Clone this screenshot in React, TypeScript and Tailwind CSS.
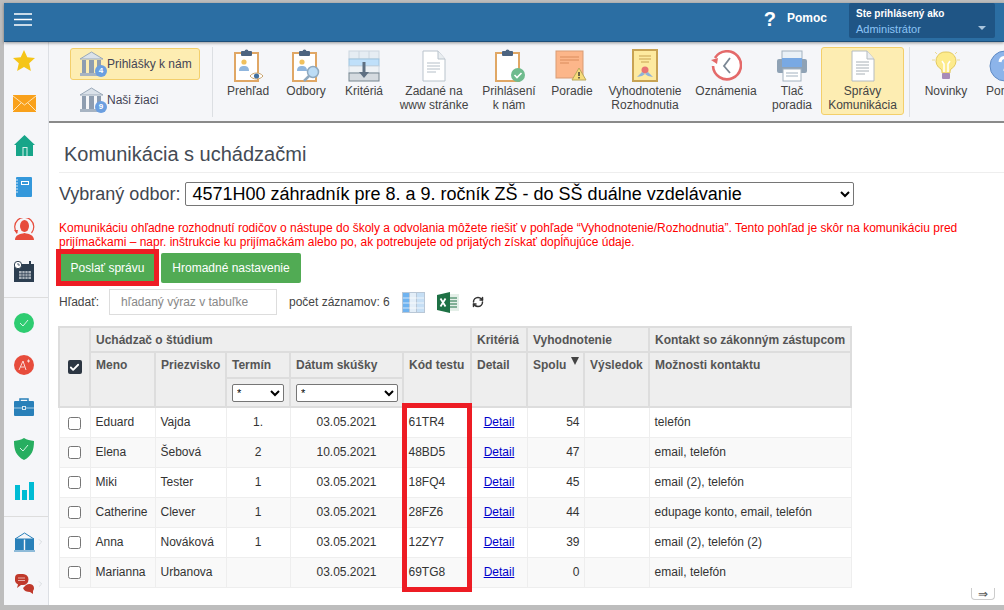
import { Check, ChevronRight, RefreshCw } from "lucide-react";
import type { ReactNode } from "react";

const Clipboard = ({ children }: { children?: ReactNode }) => (
  <svg width="34" height="34" viewBox="0 0 34 34" className="block">
    <rect x="4" y="4" width="23" height="28" fill="#fff" stroke="#e0a765" strokeWidth="2" />
    <rect x="10" y="2" width="11" height="5" rx="1" fill="#4d6480" />
    <circle cx="15.5" cy="2.5" r="2" fill="#4d6480" />
    {children}
  </svg>
);

const Person = () => (
  <g>
    <circle cx="13" cy="13" r="2.6" fill="#f1c15d" />
    <path d="M8 22c0-4 2-5 5-5s5 1 5 5z" fill="#90b6de" />
  </g>
);

const Bank = ({ n }: { n: number }) => (
  <div className="relative h-[26px] w-[26px] shrink-0">
    <svg width="25" height="26" viewBox="0 0 25 26" className="block">
      <path d="M1 8 12.5 1 24 8z" fill="#dbe2ea" stroke="#9aa9b9" />
      <rect x="3" y="9" width="4" height="13" fill="#8e9db0" />
      <rect x="10" y="9" width="5" height="13" fill="#8e9db0" />
      <rect x="18" y="9" width="4" height="13" fill="#8e9db0" />
      <rect x="1" y="22" width="23" height="3" fill="#a7b4c3" />
    </svg>
    <span className="absolute bottom-0 right-[-2px] flex h-[12px] w-[12px] items-center justify-center rounded-full bg-[#6b9fe0] text-[8px] font-bold text-white">{n}</span>
  </div>
);

const toolbarIcons: Record<string, ReactNode> = {
  prehlad: (
    <Clipboard>
      <Person />
      <path d="M19 27c3-4 10-4 13 0-3 4-10 4-13 0z" fill="#fff" stroke="#c9a36d" />
      <circle cx="25.5" cy="27" r="2.6" fill="#41709f" />
    </Clipboard>
  ),
  odbory: (
    <Clipboard>
      <Person />
      <circle cx="24" cy="23" r="5.5" fill="#bcdcf5" stroke="#8fa9bf" strokeWidth="1.5" />
      <path d="m20 27-5 5" stroke="#8fa9bf" strokeWidth="2.5" />
    </Clipboard>
  ),
  kriteria: (
    <svg width="32" height="32" viewBox="0 0 32 32" className="block">
      <rect x="1" y="1" width="30" height="8" fill="#e6edf3" stroke="#ccd6df" />
      <path d="M11 1v8M21 1v8" stroke="#ccd6df" />
      <rect x="1" y="9" width="30" height="7" fill="#bfe0fa" stroke="#9fc3dd" />
      <rect x="1" y="16" width="30" height="7" fill="#eef2f5" stroke="#ccd6df" />
      <rect x="1" y="23" width="30" height="8" fill="#d5dbe0" stroke="#76858f" />
      <path d="M16 12v13" stroke="#5f7082" strokeWidth="3" />
      <path d="m11 22 5 6 5-6z" fill="#5f7082" />
    </svg>
  ),
  zadane: (
    <svg width="24" height="32" viewBox="0 0 24 32" className="block">
      <path d="M1 1h15l7 8v22H1z" fill="#fff" stroke="#b9c3cc" />
      <path d="M16 1v8h7" fill="#e9edf0" stroke="#b9c3cc" />
      <path d="M5 13h13M5 16h13M5 19h13M5 22h9" stroke="#b5bfc8" />
    </svg>
  ),
  prihlaseni: (
    <Clipboard>
      <circle cx="26" cy="26" r="7" fill="#6fbb8e" />
      <path d="m22.5 26 2.500 2.500 4.500-4.500" stroke="#fff" strokeWidth="1.6" fill="none" />
    </Clipboard>
  ),
  poradie: (
    <svg width="34" height="34" viewBox="0 0 34 34" className="block">
      <rect x="1" y="2" width="27" height="27" fill="#fcb68a" stroke="#d99b74" />
      <path d="M5 8h19M5 11h19M5 14h9" stroke="#d98b5d" strokeWidth="1.2" />
      <path d="M17 31 24 19l7 12z" fill="#f7dc7a" stroke="#b9a75c" />
      <path d="M24 23v4M24 28v1.500" stroke="#333" strokeWidth="1.4" />
    </svg>
  ),
  vyhodnotenie: (
    <svg width="26" height="33" viewBox="0 0 26 33" className="block">
      <rect x="1" y="1" width="24" height="31" fill="#fdeaa0" stroke="#c8a353" strokeWidth="2" />
      <path d="M7 7h12M7 10h12M9 13h8" stroke="#c8a353" />
      <circle cx="13" cy="21" r="3.500" fill="#e87474" />
      <path d="m5 28 5-5 3 2 3-2 5 5-5-1-3-2-3 2z" fill="#8fb1da" />
    </svg>
  ),
  oznamenia: (
    <svg width="32" height="32" viewBox="0 0 32 32" className="block">
      <path d="M5 8a14 14 0 1 1-2 8" fill="#fff" stroke="#e46a6a" strokeWidth="2.6" />
      <path d="m1 10 7-2-1 6z" fill="#e46a6a" />
      <path d="m20 8-6 8 6 7" fill="none" stroke="#7a8794" strokeWidth="1.8" />
    </svg>
  ),
  tlac: (
    <svg width="32" height="32" viewBox="0 0 32 32" className="block">
      <rect x="6" y="1" width="20" height="12" fill="#eaf1f7" stroke="#a3b2c0" />
      <rect x="1" y="9" width="30" height="14" rx="2" fill="#8fa2b5" />
      <rect x="6" y="8" width="20" height="9" fill="#79a9e3" />
      <rect x="7" y="19" width="18" height="12" fill="#fff" stroke="#a3b2c0" />
      <path d="M10 23h12M10 26h12" stroke="#a3b2c0" />
    </svg>
  ),
  spravy: (
    <svg width="24" height="32" viewBox="0 0 24 32" className="block">
      <path d="M1 1h15l7 8v22H1z" fill="#fff" stroke="#b5bcc0" />
      <path d="M16 1v8h7" fill="#eceef0" stroke="#b5bcc0" />
      <path d="M5 12h13M5 15h13M5 18h13M5 21h13M5 24h9" stroke="#a8b0b6" />
    </svg>
  ),
  novinky: (
    <svg width="30" height="32" viewBox="0 0 30 32" className="block">
      <path d="M15 2a9 9 0 0 0-5 17c1 1 1 3 1 4h8c0-1 0-3 1-4a9 9 0 0 0-5-17z" fill="#fdeb8c" stroke="#e3c95f" />
      <path d="M13 22v-8l-2-3M17 22v-8l2-3" stroke="#fff" strokeWidth="1.500" fill="none" />
      <rect x="11" y="23" width="8" height="6" rx="1" fill="#a78bb8" />
      <path d="M1 10h3M26 10h3M4 2l2 2M26 2l-2 2" stroke="#e9d994" />
    </svg>
  ),
  pomoc: (
    <svg width="32" height="32" viewBox="0 0 32 32" className="block">
      <circle cx="16" cy="16" r="15" fill="#8cb4ea" stroke="#5f8ac4" />
      <path d="M11 12a5 5 0 1 1 7 5c-2 1-2 2-2 4" fill="none" stroke="#fff" strokeWidth="3" />
    </svg>
  ),
};

const tools = [
  { id: "prehlad", w: "w-[58px]", label: ["Prehľad"] },
  { id: "odbory", w: "w-[58px]", label: ["Odbory"] },
  { id: "kriteria", w: "w-[58px]", label: ["Kritériá"] },
  { id: "zadane", w: "w-[82px]", label: ["Zadané na", "www stránke"] },
  { id: "prihlaseni", w: "w-[68px]", label: ["Prihlásení", "k nám"] },
  { id: "poradie", w: "w-[58px]", label: ["Poradie"] },
  { id: "vyhodnotenie", w: "w-[88px]", label: ["Vyhodnotenie", "Rozhodnutia"] },
  { id: "oznamenia", w: "w-[74px]", label: ["Oznámenia"] },
  { id: "tlac", w: "w-[58px]", label: ["Tlač", "poradia"] },
];

const sideTop: ReactNode[] = [
  <svg key="star" width="24" height="24" viewBox="0 0 24 24"><path d="m12 1 3.300 7.300 7.700.8-5.800 5.200 1.700 7.700L12 18l-6.900 4 1.700-7.700L1 9.100l7.700-.8z" fill="#f5c518" /></svg>,
  <svg key="mail" width="23" height="17" viewBox="0 0 23 17"><rect width="23" height="17" fill="#f9a11b" /><path d="m0 1 11.500 9L23 1M0 16l8-8M23 16l-8-8" stroke="#fde3b4" fill="none" /></svg>,
  <svg key="home" width="21" height="21" viewBox="0 0 21 21"><path d="M10.500 0 21 10h-2v11H2V10H0z" fill="#17a589" /><rect x="8.500" y="12" width="5" height="9" fill="#d9f1ec" /><rect x="9.500" y="13" width="3" height="8" fill="#17a589" /></svg>,
  <svg key="book" width="16" height="20" viewBox="0 0 16 20"><rect width="16" height="20" rx="1" fill="#3498db" /><rect x="5" y="4" width="8" height="4" fill="#fff" /><rect x="6" y="5" width="6" height="2" fill="#3498db" /><path d="M0 3h2M0 6h2M0 9h2M0 12h2M0 15h2" stroke="#d7e9f6" /></svg>,
  <svg key="user" width="21" height="22" viewBox="0 0 21 22"><path d="M3 15a9.500 9.500 0 1 1 14.500 0" fill="none" stroke="#e74c3c" strokeWidth="1.200" /><path d="m0 12 4 0-1 4z" fill="#e74c3c" /><ellipse cx="10.500" cy="8" rx="4.500" ry="6" fill="#e74c3c" /><path d="M1 22c0-5 5-6 9.500-7 4.500 1 9.500 2 9.500 7z" fill="#e74c3c" /></svg>,
  <svg key="cal" width="21" height="21" viewBox="0 0 21 21"><rect y="3" width="20" height="18" fill="#2c3e50" /><rect x="15" width="2" height="5" fill="#2c3e50" /><path d="M5 10h12v8H5z" fill="#aab2ba" /><path d="M5 12.700h12M5 15.300h12M8 10v8M11 10v8M14 10v8" stroke="#2c3e50" strokeWidth="0.7" /><circle cx="4" cy="4" r="3.700" fill="#fff" stroke="#2c3e50" /><path d="M4 2v2h2" stroke="#2c3e50" strokeWidth="0.8" fill="none" /></svg>,
];

const sideMid: ReactNode[] = [
  <svg key="ok" width="20" height="20" viewBox="0 0 20 20"><circle cx="10" cy="10" r="10" fill="#2ecc71" /><path d="m6 10 3 3 5-6" stroke="#d5f5e3" fill="none" /></svg>,
  <svg key="a" width="20" height="20" viewBox="0 0 20 20"><circle cx="10" cy="10" r="10" fill="#e74c3c" /><path d="m5 15 4-9 3 9M6.500 12h4M13 6h3M14.500 4.500v3" stroke="#fadbd8" fill="none" /></svg>,
  <svg key="case" width="20" height="18" viewBox="0 0 20 18"><path d="M6 3V1h8v2" fill="none" stroke="#2980b9" strokeWidth="1.500" /><rect y="3" width="20" height="15" rx="1" fill="#2980b9" /><path d="M0 10h20" stroke="#a9cce3" /><rect x="8.500" y="8.500" width="3" height="3" fill="#2980b9" stroke="#d4e6f1" /></svg>,
  <svg key="shield" width="20" height="22" viewBox="0 0 20 22"><path d="M10 0c3 2 6 2.500 10 3 0 9-2 15-10 19C2 18 0 12 0 3c4-.5 7-1 10-3z" fill="#27ae60" /><path d="m6 10 3 3 5-6" stroke="#d5f5e3" fill="none" /></svg>,
  <svg key="chart" width="19" height="18" viewBox="0 0 19 18"><rect y="3" width="5" height="15" fill="#00bcd4" /><rect x="7" y="8" width="5" height="10" fill="#00bcd4" /><rect x="14" width="5" height="18" fill="#00bcd4" /></svg>,
];

const Side = ({ children }: { children: ReactNode }) => (
  <div className="flex h-[42px] items-center justify-center pr-[4px]">{children}</div>
);

const SideArrow = ({ children }: { children: ReactNode }) => (
  <div className="flex h-[42px] items-center pl-[10px]">
    {children}
    <ChevronRight className="ml-[1px] h-[14px] w-[9px] shrink-0 text-[#cfd3d7]" />
  </div>
);

const rows = [
  ["Eduard", "Vajda", "1.", "03.05.2021", "61TR4", "54", "telefón"],
  ["Elena", "Šebová", "2", "10.05.2021", "48BD5", "47", "email, telefón"],
  ["Miki", "Tester", "1", "03.05.2021", "18FQ4", "45", "email (2), telefón"],
  ["Catherine", "Clever", "1", "03.05.2021", "28FZ6", "44", "edupage konto, email, telefón"],
  ["Anna", "Nováková", "1", "03.05.2021", "12ZY7", "39", "email (2), telefón (2)"],
  ["Marianna", "Urbanova", "", "03.05.2021", "69TG8", "0", "email, telefón"],
];

const th = "border-2 border-[#dddddd] bg-[#eeeeee] px-[5px] text-left align-top font-bold text-[#555]";
const td = "border border-[#eeeeee] px-[5px] align-middle";

export default function App() {
  return (
    <div className="flex h-[610px] w-[1004px] flex-col overflow-hidden bg-[#bdbdbd] pb-[5px] pl-[4px] pt-[3px] font-['Liberation_Sans',Arial,sans-serif] text-[12px] text-[#333]">
      <header className="z-10 flex h-[39px] shrink-0 items-start border-b border-[#1d4f7a] bg-[#2b6ea3] shadow-[0_1px_3px_rgba(0,0,0,0.4)]">
        <svg width="18" height="13" viewBox="0 0 18 13" className="ml-[10px] mt-[10px]">
          <path d="M0 1h18M0 6.500h18M0 12h18" stroke="#fff" strokeWidth="1.500" />
        </svg>
        <div className="ml-auto flex items-start">
          <span className="mt-[4px] text-[20px] font-bold leading-[24px] text-white">?</span>
          <span className="ml-[11px] mt-[8px] text-[12px] font-bold leading-[14px] text-white">Pomoc</span>
          <div className="relative ml-[22px] mr-[9px] h-[35px] w-[146px] rounded-[2px] bg-[#1f5585] px-[7px] pt-[4px] text-[11px]">
            <div className="text-[10px] font-bold leading-[14px] text-white">Ste prihlásený ako</div>
            <div className="mt-[1px] leading-[15px] text-[#8cc4f5]">Administrátor</div>
            <span className="absolute bottom-[8px] right-[9px] h-0 w-0 border-x-[4px] border-t-[4px] border-x-transparent border-t-[#a9c4dc]" />
          </div>
        </div>
      </header>

      <div className="flex min-h-0 flex-1">
        <aside className="w-[45px] shrink-0 overflow-hidden border-r border-[#dcdfe4] bg-[#f5f6f9]">
          <div className="-mt-[2px]">
            {sideTop.map((icon, i) => <Side key={i}>{icon}</Side>)}
          </div>
          <div className="mb-[4px] mt-[5px] border-t border-[#dddddd]" />
          {sideMid.map((icon, i) => <Side key={i}>{icon}</Side>)}
          <div className="mb-[4px] mt-[4px] border-t border-[#dddddd]" />
          <SideArrow>
            <svg width="21" height="20" viewBox="0 0 21 20" className="shrink-0">
              <path d="M10.500 1 20 7H1z" fill="none" stroke="#2980b9" />
              <path d="M1 7h8.800v11H1zM11.200 7H20v11h-8.800z" fill="#2980b9" />
              <path d="M0 19h21" stroke="#2980b9" />
            </svg>
          </SideArrow>
          <SideArrow>
            <svg width="21" height="20" viewBox="0 0 21 20" className="shrink-0"><path d="M1 4a4 4 0 0 1 4-4h4a5 5 0 0 1 0 11H7l-4 3 1-3.500A5 5 0 0 1 1 7z" fill="#c0392b" /><path d="M4 4h7M4 6.500h7" stroke="#e6b0aa" /><path d="M12 11c3-2 8-1 8 3 0 1.500-.5 2-1 3v3l-3-2c-3 0-6-1-7-4z" fill="#c0392b" /></svg>
          </SideArrow>
        </aside>

        <div className="flex min-w-0 flex-1 flex-col bg-white">
          <div className="flex h-[81px] shrink-0 items-start overflow-hidden border-b-2 border-[#8a8a8a] bg-[#f5f6f9] pt-[5px]">
            <div className="ml-[21px] mt-[1px] flex w-[130px] shrink-0 flex-col">
              <div className="flex h-[32px] items-center gap-[2px] whitespace-nowrap rounded-[3px] border border-[#f3cf6b] bg-[#fdedb2] pl-[8px] text-[#445]">
                <Bank n={4} />
                Prihlášky k nám
              </div>
              <div className="mt-[4px] flex h-[32px] items-center gap-[2px] whitespace-nowrap pl-[9px] text-[#445]">
                <Bank n={9} />
                Naši žiaci
              </div>
            </div>
            <div className="ml-[12px] mr-[6px] h-[70px] w-px shrink-0 bg-[#dcdfe3]" />
            {tools.map((t) => (
              <div key={t.id} className={`flex ${t.w} shrink-0 flex-col items-center whitespace-nowrap text-center leading-[14px] text-[#444]`}>
                <div className="flex h-[37px] items-center justify-center">{toolbarIcons[t.id]}</div>
                {t.label.map((l) => <div key={l}>{l}</div>)}
              </div>
            ))}
            <div className="flex h-[68px] w-[83px] shrink-0 flex-col items-center rounded-[3px] border border-[#f3cf6b] bg-[#fdedb2] text-center leading-[14px] text-[#444]">
              <div className="flex h-[36px] items-center justify-center">{toolbarIcons.spravy}</div>
              <div>Správy</div>
              <div>Komunikácia</div>
            </div>
            <div className="ml-[5px] mr-[9px] h-[70px] w-px shrink-0 bg-[#dcdfe3]" />
            <div className="flex w-[54px] shrink-0 flex-col items-center leading-[14px] text-[#444]">
              <div className="flex h-[37px] items-center justify-center">{toolbarIcons.novinky}</div>
              Novinky
            </div>
            <div className="ml-[13px] flex w-[40px] shrink-0 flex-col items-start leading-[14px] text-[#444]">
              <div className="flex h-[37px] items-center justify-center pl-[3px]">{toolbarIcons.pomoc}</div>
              Pomoc
            </div>
          </div>

          <div className="relative flex-1 pl-[10px]">
            <h1 className="ml-[5px] pt-[19px] text-[20px] font-normal leading-[24px] text-[#444b55]">Komunikácia s uchádzačmi</h1>
            <div className="mt-[6px] border-t border-[#eeeeee]" />
            <div className="mt-[9px] flex h-[24px] items-center">
              <span className="text-[18px] text-[#3f4650]">Vybraný odbor:</span>
              <select className="ml-[5px] h-[24px] w-[669px] rounded-[2px] border border-[#767676] bg-white pl-[2px] text-[18px] text-black">
                <option>4571H00 záhradník pre 8. a 9. ročník ZŠ - do SŠ duálne vzdelávanie</option>
              </select>
            </div>
            <p className="mt-[13px] w-[920px] pt-[2px] leading-[14px] text-[#ff0000]">
              Komunikáciu ohľadne rozhodnutí rodičov o nástupe do školy a odvolania môžete riešiť v pohľade “Vyhodnotenie/Rozhodnutia”. Tento pohľad je skôr na komunikáciu pred prijímačkami – napr. inštrukcie ku prijímačkám alebo po, ak potrebujete od prijatých získať dopĺňujúce údaje.
            </p>
            <div className="mt-[4px] flex gap-[5px]">
              <div className="relative">
                <button className="h-[30px] w-[97px] rounded-[2px] bg-[#51ab54] text-[12px] text-white">Poslať správu</button>
                <span className="absolute bottom-[-3px] left-[-3px] right-[-3px] top-[-4px] border-[5px] border-[#ed1c24]" />
              </div>
              <button className="h-[30px] w-[140px] rounded-[2px] bg-[#51ab54] text-[12px] text-white">Hromadné nastavenie</button>
            </div>
            <div className="mt-[6px] flex h-[26px] items-center">
              <span className="w-[50px] text-[#444]">Hľadať:</span>
              <input readOnly placeholder="hľadaný výraz v tabuľke" className="h-[26px] w-[168px] border border-[#dddddd] bg-white pl-[11px] text-[12px] placeholder:text-[#888]" />
              <span className="ml-[12px] text-[#444]">počet záznamov: 6</span>
              <svg width="23" height="21" viewBox="0 0 23 21" className="ml-[12px]">
                <rect width="23" height="21" fill="#b9c7d6" />
                <rect x="1" y="1" width="6" height="19" fill="#6fb3f0" />
                <rect x="8" y="1" width="6" height="19" fill="#e3eef8" />
                <rect x="15" y="1" width="7" height="19" fill="#c6dff5" />
                <path d="M1 6h21M1 11h21M1 16h21" stroke="#fff" strokeWidth="0.7" />
              </svg>
              <svg width="22" height="21" viewBox="0 0 22 21" className="ml-[12px]">
                <rect x="9" y="2" width="13" height="17" fill="#e4efe8" />
                <path d="M13 6h7M13 9h7M13 12h7M13 15h7" stroke="#1e7145" />
                <path d="M0 3 13 0v21L0 18z" fill="#1e7145" />
                <path d="m3.500 6.500 5 8M8.500 6.500l-5 8" stroke="#fff" strokeWidth="1.800" />
              </svg>
              <RefreshCw className="ml-[13px] h-[12px] w-[12px] text-[#333]" strokeWidth={3} />
            </div>

            <div className="relative -ml-[1px] mt-[11px] w-[794px]">
              <table className="w-[794px] table-fixed border-collapse text-[12px]">
                <colgroup>
                  <col className="w-[31px]" />
                  <col className="w-[65px]" />
                  <col className="w-[71px]" />
                  <col className="w-[64px]" />
                  <col className="w-[113px]" />
                  <col className="w-[68px]" />
                  <col className="w-[56px]" />
                  <col className="w-[57px]" />
                  <col className="w-[65px]" />
                  <col />
                </colgroup>
                <thead>
                  <tr className="h-[25px]">
                    <th rowSpan={3} className={`${th} !align-middle !px-0`}>
                      <span className="mx-auto flex h-[14px] w-[14px] items-center justify-center rounded-[2px] bg-[#2c3642] text-white">
                        <Check className="h-[11px] w-[11px]" strokeWidth={4} />
                      </span>
                    </th>
                    <th colSpan={5} className={`${th} !align-middle`}>Uchádzač o štúdium</th>
                    <th className={`${th} !align-middle`}>Kritériá</th>
                    <th colSpan={2} className={`${th} !align-middle`}>Vyhodnotenie</th>
                    <th className={`${th} !align-middle whitespace-nowrap`}>Kontakt so zákonným zástupcom</th>
                  </tr>
                  <tr className="h-[26px]">
                    <th rowSpan={2} className={`${th} pt-[3px]`}>Meno</th>
                    <th rowSpan={2} className={`${th} pt-[3px]`}>Priezvisko</th>
                    <th className={`${th} pt-[3px]`}>Termín</th>
                    <th className={`${th} pt-[3px]`}>Dátum skúšky</th>
                    <th rowSpan={2} className={`${th} pt-[3px] whitespace-nowrap`}>Kód testu</th>
                    <th rowSpan={2} className={`${th} pt-[3px]`}>Detail</th>
                    <th rowSpan={2} className={`${th} pt-[3px]`}>
                      <span className="flex justify-between">
                        Spolu
                        <span className="mr-[-1px] mt-[1px] h-0 w-0 border-x-[4px] border-t-[8px] border-x-transparent border-t-[#444]" />
                      </span>
                    </th>
                    <th rowSpan={2} className={`${th} pt-[3px]`}>Výsledok</th>
                    <th rowSpan={2} className={`${th} pt-[3px]`}>Možnosti kontaktu</th>
                  </tr>
                  <tr className="h-[29px]">
                    <th className={`${th} !align-middle`}>
                      <select className="h-[18px] w-[52px] rounded-[2px] border border-[#767676] bg-white text-[11px] font-normal text-black"><option>*</option></select>
                    </th>
                    <th className={`${th} !align-middle`}>
                      <select className="h-[18px] w-[102px] rounded-[2px] border border-[#767676] bg-white text-[11px] font-normal text-black"><option>*</option></select>
                    </th>
                  </tr>
                </thead>
                <tbody>
                  {rows.map((r, i) => (
                    <tr key={r[0]} className={`h-[30px] ${i % 2 ? "bg-[#f9f9f9]" : "bg-white"}`}>
                      <td className={`${td} text-center`}><input type="checkbox" readOnly className="align-middle" /></td>
                      <td className={td}>{r[0]}</td>
                      <td className={td}>{r[1]}</td>
                      <td className={`${td} text-center`}>{r[2]}</td>
                      <td className={`${td} text-center`}>{r[3]}</td>
                      <td className={td}>{r[4]}</td>
                      <td className={`${td} text-center`}><span className="text-[#0000cc] underline">Detail</span></td>
                      <td className={`${td} !pr-[4px] text-right`}>{r[5]}</td>
                      <td className={td}></td>
                      <td className={td}>{r[6]}</td>
                    </tr>
                  ))}
                </tbody>
              </table>
              <span className="absolute bottom-[-4px] left-[344px] top-[77px] w-[70px] border-[5px] border-[#ed1c24]" />
            </div>
            <span className="absolute bottom-[5px] right-[9px] flex h-[12px] w-[24px] items-center justify-center rounded-b-[4px] border border-t-0 border-[#cccccc] text-[12px] leading-none text-[#555]">⇒</span>
          </div>
        </div>
      </div>
    </div>
  );
}
